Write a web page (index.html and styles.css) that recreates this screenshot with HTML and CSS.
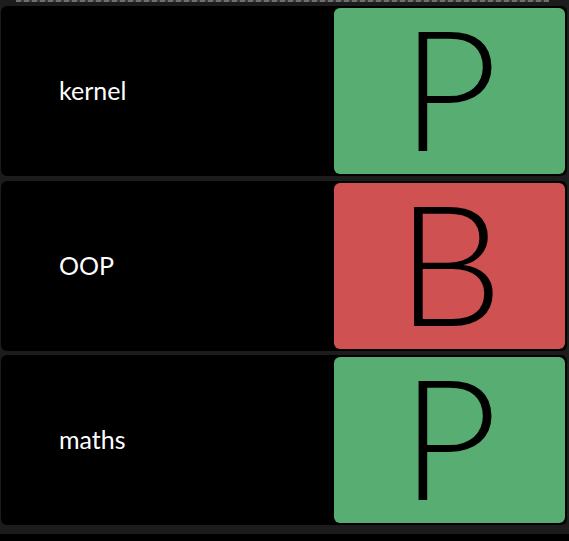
FILE: index.html
```html
<!DOCTYPE html>
<html>
<head>
<meta charset="utf-8">
<link rel="stylesheet" href="styles.css">
</head>
<body>
<div class="panel">
  <div class="dashes"></div>
  <div class="list">
    <div class="row">
      <div class="name">kernel</div>
      <div class="grade pass"><span class="letter">P</span></div>
    </div>
    <div class="row">
      <div class="name">OOP</div>
      <div class="grade fail"><span class="letter">B</span></div>
    </div>
    <div class="row">
      <div class="name">maths</div>
      <div class="grade pass"><span class="letter">P</span></div>
    </div>
  </div>
</div>
</body>
</html>
```
FILE: styles.css
```css
html, body {
  margin: 0;
  padding: 0;
  background: #000;
  font-family: Lato, "Noto Sans", sans-serif;
}
.panel {
  background: #1c1c1c;
  padding: 0 2px 9px 1px;
}
.dashes {
  height: 2px;
  margin: 0 18px 0 15px;
  background: repeating-linear-gradient(90deg, #6e6e6e 0 5px, #3a3a3a 5px 8px);
}
.list {
  display: flex;
  flex-direction: column;
  gap: 4.5px;
  padding-top: 4px;
}
.row {
  display: flex;
  height: 170px;
  background: #000;
  border-radius: 6px;
}
.name {
  flex: 1;
  display: flex;
  align-items: center;
  padding-left: 58px;
  padding-bottom: 2px;
  color: #fff;
  font-size: 25px;
  font-weight: 400;
}
.grade {
  width: 231px;
  margin: 2px 2px 2px 0;
  border-radius: 6px;
  display: flex;
  align-items: center;
  justify-content: center;
}
.letter {
  color: #000;
  font-size: 168px;
  font-weight: 300;
  line-height: 150px;
  margin-bottom: 10px;
}
.pass { background: #58ad72; }
.fail { background: #cf5152; }
```
